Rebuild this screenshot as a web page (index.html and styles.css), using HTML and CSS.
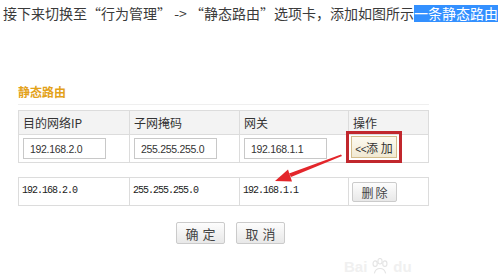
FILE: index.html
```html
<!DOCTYPE html>
<html lang="zh-CN">
<head>
    <meta charset="UTF-8">
    <title>静态路由</title>
    <link rel="stylesheet" href="styles.css">
</head>
<body>
    <p class="intro">接下来切换至“行为管理” -&gt; “静态路由”选项卡，添加如图所示<span class="selected">一条静态路由</span></p>

    <div class="panel">
        <div class="panel-title">静态路由</div>

        <!-- new route form -->
        <div class="route-table">
            <div class="cell head">目的网络IP</div>
            <div class="cell head">子网掩码</div>
            <div class="cell head">网关</div>
            <div class="cell head">操作</div>
            <div class="cell"><input class="field" type="text" value="192.168.2.0"></div>
            <div class="cell"><input class="field" type="text" value="255.255.255.0"></div>
            <div class="cell"><input class="field" type="text" value="192.168.1.1"></div>
            <div class="cell action"><button class="btn-add" type="button"><small>&lt;&lt;</small>添 加</button></div>
        </div>

        <!-- existing routes -->
        <div class="route-table list">
            <div class="cell mono">192.168.2.0</div>
            <div class="cell mono">255.255.255.0</div>
            <div class="cell mono">192.168.1.1</div>
            <div class="cell action"><button class="btn btn-sm" type="button">删除</button></div>
        </div>

        <div class="form-actions">
            <button class="btn btn-lg" type="button">确定</button>
            <button class="btn btn-lg" type="button">取消</button>
        </div>
    </div>

    <!-- annotation arrow drawn over the screenshot -->
    <svg class="arrow" width="500" height="275" viewBox="0 0 500 275">
        <polygon points="341,154.5 342,156 291,177 289,173.5" fill="#e3262b"/>
        <polygon points="275,181 292,181.5 288,169.5" fill="#e3262b"/>
    </svg>

    <div class="watermark">
        <span>Bai</span>
        <svg width="20" height="17" viewBox="0 0 24 21">
            <ellipse cx="6" cy="7" rx="2.6" ry="3.4" fill="none" stroke="#e4e4e4" stroke-width="1.4"/>
            <ellipse cx="12" cy="4" rx="2.6" ry="3.4" fill="none" stroke="#e4e4e4" stroke-width="1.4"/>
            <ellipse cx="18" cy="7" rx="2.6" ry="3.4" fill="none" stroke="#e4e4e4" stroke-width="1.4"/>
            <path d="M5 19 C7 11 17 11 19 19" fill="none" stroke="#e4e4e4" stroke-width="1.4"/>
        </svg>
        <span>du</span>
    </div>
</body>
</html>
```

FILE: styles.css
```css
body {
    margin: 0;
    width: 500px;
    height: 275px;
    overflow: hidden;
    background: #fff;
    color: #333;
    font-family: "Noto Sans CJK SC", sans-serif;
}

.intro {
    margin: 0;
    padding: 5px 0 0 3px;
    font-size: 14px;
    line-height: 17px;
    color: #3a3a3a;
    white-space: nowrap;
}

.selected {
    display: inline-block;
    line-height: 17px;
    background-color: #3390ff;
    color: #fff;
}

.panel {
    margin-top: 63px;
    padding-left: 18px;
}

.panel-title {
    width: 411px;
    font-size: 12px;
    font-weight: bold;
    line-height: 14px;
    color: #e3a21a;
    padding-bottom: 5px;
    border-bottom: 1px solid #efefef;
}

.route-table {
    display: grid;
    grid-template-columns: 111px 110px 109px 79px;
    width: max-content;
    margin-top: 5px;
    border: 1px solid #dcdcdc;
}

.route-table.list {
    margin-top: 14px;
}

.cell {
    box-sizing: border-box;
    height: 27px;
    padding: 3px 4px;
    border-right: 1px solid #dcdcdc;
    font-size: 12px;
}

.cell:nth-child(4n) {
    border-right: none;
}

.cell.head {
    height: 24px;
    padding: 0 4px;
    line-height: 23px;
    background: #f3f3f3;
    border-bottom: 1px solid #dcdcdc;
    color: #333;
}

.cell.action {
    padding: 1px 2px;
}

.list .cell.action {
    padding: 4px 3px;
}

.cell.mono {
    padding: 0 3px;
    line-height: 25px;
    font-family: "Liberation Mono", monospace;
    font-size: 10px;
    letter-spacing: -1px;
    color: #222;
}

.field {
    box-sizing: border-box;
    width: 83px;
    height: 21px;
    margin: 0;
    padding: 0 6px;
    border: 1px solid #c8c8c8;
    font-family: "Liberation Sans", Arial, sans-serif;
    font-size: 10.5px;
    letter-spacing: -0.3px;
    color: #333;
}

.btn-add {
    box-sizing: border-box;
    width: 46px;
    height: 22px;
    margin: 0;
    padding: 0;
    border: 1px solid #d3bd8c;
    border-radius: 0;
    background: linear-gradient(#fdfaf1, #f1e9d3);
    font-family: "Noto Sans CJK SC", sans-serif;
    font-size: 12px;
    color: #333;
    outline: 3px solid #c1272d;
    outline-offset: 2px;
}

.btn-add small {
    font-family: "Liberation Sans", sans-serif;
    font-size: 10px;
    letter-spacing: -0.5px;
}

.btn {
    box-sizing: border-box;
    margin: 0;
    padding: 0;
    border: 1px solid #cbcbcb;
    border-radius: 2px;
    background: linear-gradient(#fdfdfd, #e8e8e8);
    font-family: "Noto Sans CJK SC", sans-serif;
    color: #444;
}

.btn-sm {
    width: 45px;
    height: 20px;
    font-size: 12px;
    letter-spacing: 2px;
    text-indent: 2px;
}

.btn-lg {
    width: 49px;
    height: 22px;
    font-size: 13px;
    letter-spacing: 4px;
    text-indent: 4px;
}

.form-actions {
    display: flex;
    gap: 11px;
    margin-top: 16px;
    padding-left: 158px;
}

.arrow {
    position: absolute;
    left: 0;
    top: 0;
    pointer-events: none;
}

.watermark {
    position: absolute;
    left: 344px;
    top: 258px;
    display: flex;
    align-items: flex-start;
    gap: 3px;
    font-family: "Liberation Sans", sans-serif;
    font-size: 15px;
    font-weight: bold;
    line-height: 17px;
    color: #f0f0f0;
}
```
